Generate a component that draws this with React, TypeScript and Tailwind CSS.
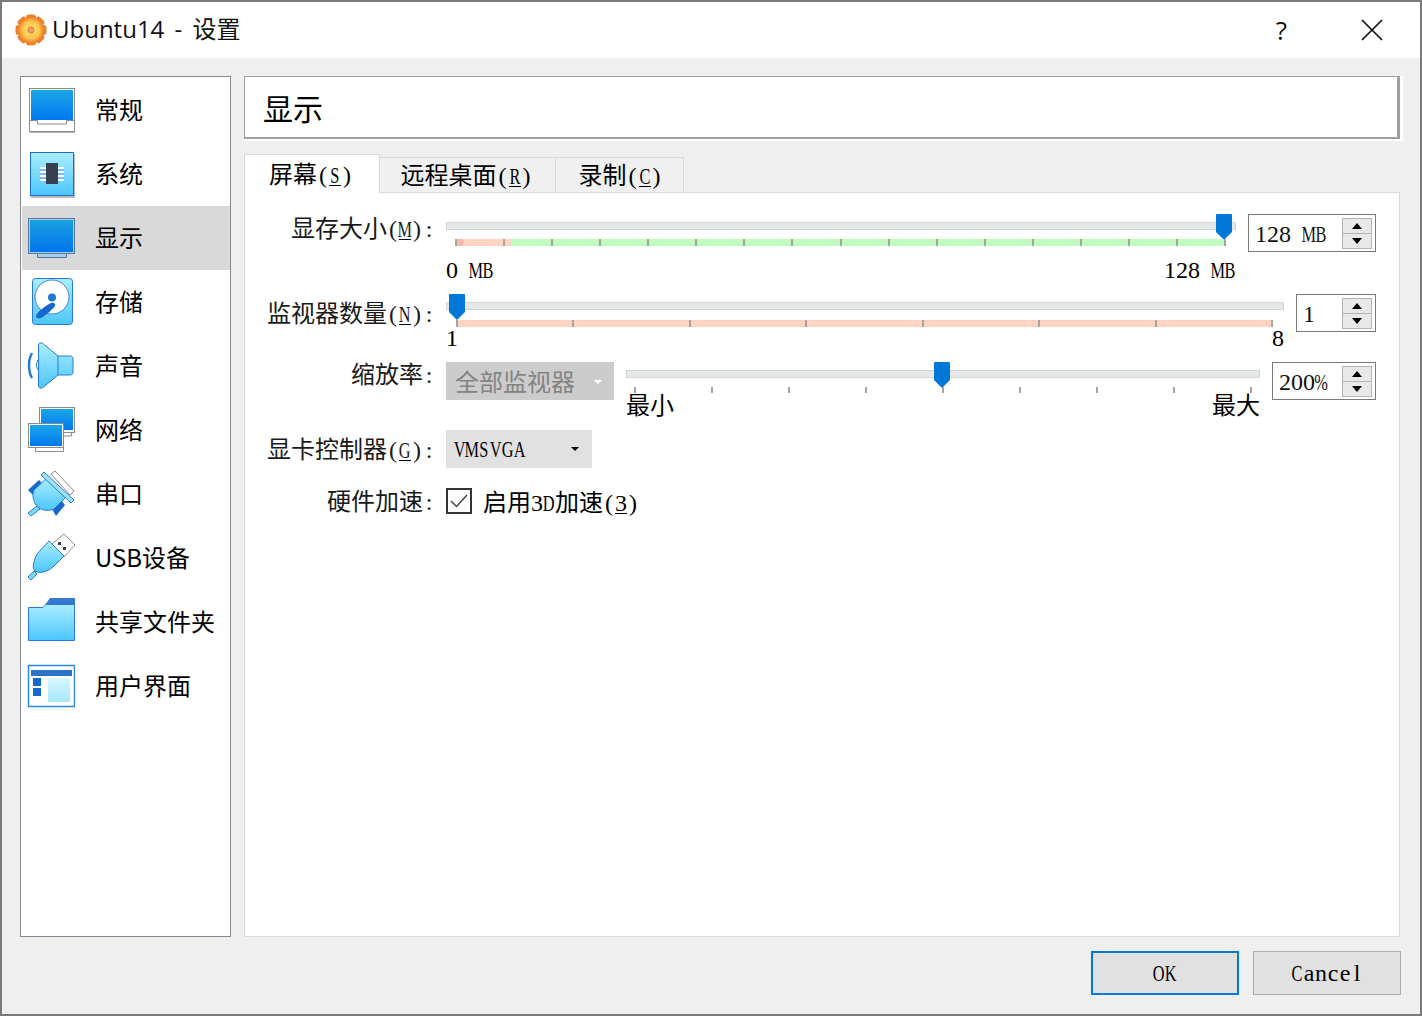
import type { ReactNode } from "react";

const cjk = "font-['Noto_Sans_CJK_SC','Liberation_Sans',sans-serif]";

// the reference is SimSun: latin letters sit in 12px cells, capitals squeezed to fit
function Cell({ c, under }: { c: string; under?: boolean }) {
  const squeeze = /[A-Z%]/.test(c);
  return (
    <span className={`inline-flex justify-center w-[12px] h-[22px] leading-[22px] align-baseline ${under ? "border-b border-black" : ""}`}>
      <span className={squeeze ? "inline-block scale-x-[0.68]" : "inline-block"}>{c === " " ? "\u00a0" : c}</span>
    </span>
  );
}

function L({ children }: { children: string }) {
  return (
    <span className="font-['Liberation_Serif',serif] text-[24px] whitespace-nowrap">
      {children.split("").map((c, i) => (
        <Cell key={i} c={c} />
      ))}
    </span>
  );
}

// "(S)" with the mnemonic underlined
function Key({ k, colon }: { k: string; colon?: boolean }) {
  return (
    <span className="font-['Liberation_Serif',serif] text-[24px] whitespace-nowrap">
      <Cell c="(" />
      <Cell c={k} under />
      <Cell c=")" />
      {colon && <Cell c=":" />}
    </span>
  );
}

function Grad({ id, from, to }: { id: string; from: string; to: string }) {
  return (
    <defs>
      <linearGradient id={id} x1="0" y1="0" x2="0" y2="1">
        <stop offset="0" stopColor={from} />
        <stop offset="1" stopColor={to} />
      </linearGradient>
    </defs>
  );
}

function GeneralIcon() {
  return (
    <svg width="48" height="48" viewBox="0 0 48 48">
      <Grad id="g1" from="#1ba6e6" to="#0078f2" />
      <rect x="3" y="3" width="46" height="44" fill="#b5b5b5" />
      <rect x="2.500" y="2.500" width="45" height="43" fill="#fff" stroke="#8b8b8b" />
      <rect x="4" y="4" width="42" height="30" fill="url(#g1)" />
      <path d="M3 34.500h7.500v3.500h29v-3.500H47" fill="none" stroke="#8b8b8b" />
    </svg>
  );
}

function SystemIcon() {
  return (
    <svg width="48" height="48" viewBox="0 0 48 48">
      <Grad id="g2" from="#aaeeff" to="#4cc6fd" />
      <rect x="4" y="4" width="44" height="44" fill="#b9b9b9" />
      <rect x="3.500" y="2.500" width="43" height="43" fill="url(#g2)" stroke="#1a6fd0" />
      <path d="M13 17h24v2H13zm0 4h24v2H13zm0 4h24v2H13zm0 4h24v2H13z" fill="#fff" />
      <path d="M13 19h24v2H13zm0 4h24v2H13zm0 4h24v2H13z" fill="#79bdf0" />
      <rect x="19" y="13" width="12" height="21" fill="#36404e" />
    </svg>
  );
}

function DisplayIcon() {
  return (
    <svg width="48" height="48" viewBox="0 0 48 48">
      <Grad id="g3" from="#1ba0e0" to="#0076ee" />
      <path d="M10.500 39.500h29v4h-29z" fill="#a9cdf0" stroke="#54779b" />
      <rect x="1.500" y="4.500" width="46" height="35" fill="#a9cdf0" stroke="#54779b" />
      <rect x="3" y="6" width="43" height="32" fill="url(#g3)" />
    </svg>
  );
}

function StorageIcon() {
  return (
    <svg width="48" height="48" viewBox="0 0 48 48">
      <Grad id="g4" from="#aaeeff" to="#4cc6fd" />
      <rect x="5.500" y="0.500" width="40" height="46" rx="3" fill="url(#g4)" stroke="#2a78d8" />
      <circle cx="25" cy="19" r="17" fill="#fff" stroke="#3f88dc" />
      <circle cx="25" cy="19.500" r="4" fill="#1e78d8" />
      <path d="M9 38c0-3 10-11 15-13 3-1 5 1 4 3-2 3-10 10-14 12-3 1-5 0-5-2z" fill="#1668cc" />
    </svg>
  );
}

function AudioIcon() {
  return (
    <svg width="48" height="48" viewBox="0 0 48 48">
      <Grad id="g5" from="#aaeeff" to="#4cc6fd" />
      <path d="M11.500 3c0-2 3-3 5-1l14.500 12h12c2 0 3 1 3 3v13c0 2-1 3-3 3H31L16.500 45c-2 2-5 1-5-1z" fill="url(#g5)" stroke="#2a78d8" />
      <path d="M31 14v19" stroke="#2a78d8" />
      <path d="M5 11c-4 7-4 18 0 25" fill="none" stroke="#2a78d8" strokeWidth="2.500" />
      <path d="M11 18c-2 3-2 7 0 10" fill="none" stroke="#2a78d8" />
    </svg>
  );
}

function NetworkIcon() {
  return (
    <svg width="48" height="48" viewBox="0 0 48 48">
      <Grad id="g6" from="#1ba6e6" to="#0078f2" />
      <rect x="12.500" y="1.500" width="35" height="25" fill="#fff" stroke="#8b8b8b" />
      <rect x="14" y="3" width="32" height="21" fill="url(#g6)" />
      <path d="M44.500 27v3h-8" fill="none" stroke="#8b8b8b" />
      <path d="M8.500 41v4.500h28V41" fill="#fff" stroke="#8b8b8b" />
      <rect x="1.500" y="17.500" width="35" height="24" fill="#fff" stroke="#8b8b8b" />
      <rect x="3" y="19" width="32" height="21" fill="url(#g6)" />
    </svg>
  );
}

function SerialIcon() {
  return (
    <svg width="48" height="48" viewBox="0 0 48 48">
      <Grad id="g7" from="#aaeeff" to="#4cc6fd" />
      <path d="M24 4l4-3 19 20-4 4z" fill="#fff" stroke="#8b8b8b" />
      <path d="M1 20l11-10 4 4L6 25z" fill="#1668cc" />
      <path d="M25 39l9-9 4 5-9 11z" fill="#1668cc" />
      <path d="M7 20L20 8l19 19-12 12c-7 3-14 1-18-4-3-5-4-10-2-15z" fill="url(#g7)" stroke="#2a78d8" />
      <path d="M14 5l3-3 30 28-3 3z" fill="#9fe4fd" stroke="#2a78d8" />
      <path d="M10 36l-9 7 3 3 9-7z" fill="#7fd8fd" stroke="#2a78d8" />
    </svg>
  );
}

function UsbIcon() {
  return (
    <svg width="48" height="48" viewBox="0 0 48 48">
      <Grad id="g8" from="#aaeeff" to="#4cc6fd" />
      <g transform="translate(0 -2)">
        <path d="M25 12L37 2l11 11-11 12z" fill="#fff" stroke="#8b8b8b" />
        <rect x="31" y="10" width="3" height="3" fill="#36404e" />
        <rect x="36" y="15" width="3" height="3" fill="#36404e" />
        <path d="M22 9l15 15-11 11c-6 5-13 7-18 4-3-3-2-9 2-17z" fill="url(#g8)" stroke="#2a78d8" />
        <path d="M7 39l-6 6 3 3 6-6z" fill="#7fd8fd" stroke="#2a78d8" />
      </g>
    </svg>
  );
}

function FolderIcon() {
  return (
    <svg width="48" height="48" viewBox="0 0 48 48">
      <Grad id="g9" from="#aaeeff" to="#4cc6fd" />
      <path d="M18 7l5-7h25v9H18z" fill="#3478d0" />
      <path d="M1.500 9.500H16l3-3h28.500v36H1.500z" fill="url(#g9)" stroke="#2a78d8" />
    </svg>
  );
}

function InterfaceIcon() {
  return (
    <svg width="48" height="48" viewBox="0 0 48 48">
      <Grad id="g10" from="#d8f7ff" to="#a6e8ff" />
      <rect x="1.500" y="3.500" width="46" height="41" fill="#fff" stroke="#2a88e0" strokeWidth="1.500" />
      <rect x="4" y="8" width="41" height="6" fill="#2e72c8" />
      <rect x="6" y="16" width="8" height="8" fill="#1668cc" />
      <rect x="6" y="26" width="8" height="8" fill="#1668cc" />
      <rect x="21" y="16" width="22" height="24" fill="url(#g10)" />
    </svg>
  );
}

function TitleIcon() {
  const teeth = [0, 45, 90, 135, 180, 225, 270, 315];
  return (
    <svg width="32" height="32" viewBox="0 0 32 32">
      <defs>
        <radialGradient id="gear" cx="0.5" cy="0.5" r="0.5">
          <stop offset="0" stopColor="#ffe07a" />
          <stop offset="0.65" stopColor="#fdc84e" />
          <stop offset="1" stopColor="#ee8a2c" />
        </radialGradient>
      </defs>
      {teeth.map((a) => (
        <rect key={a} x="11" y="0.500" width="10" height="9" rx="3" fill="#ee7f2e" transform={`rotate(${a} 16 16)`} />
      ))}
      <circle cx="16" cy="16" r="12.500" fill="url(#gear)" />
      <circle cx="16" cy="16" r="3" fill="#e8a060" stroke="#e07a30" />
    </svg>
  );
}

const pages = [
  { name: "常规", icon: <GeneralIcon /> },
  { name: "系统", icon: <SystemIcon /> },
  { name: "显示", icon: <DisplayIcon />, active: true },
  { name: "存储", icon: <StorageIcon /> },
  { name: "声音", icon: <AudioIcon /> },
  { name: "网络", icon: <NetworkIcon /> },
  { name: "串口", icon: <SerialIcon /> },
  { name: "USB设备", icon: <UsbIcon /> },
  { name: "共享文件夹", icon: <FolderIcon /> },
  { name: "用户界面", icon: <InterfaceIcon /> },
];

function Handle({ className }: { className: string }) {
  return (
    <svg width="16" height="26" viewBox="0 0 16 26" className={`absolute ${className}`}>
      <path d="M1 0h14a1 1 0 0 1 1 1v17l-8 8-8-8V1a1 1 0 0 1 1-1z" fill="#0078d7" />
    </svg>
  );
}

function Spin({ value, className }: { value: string; className: string }) {
  return (
    <div className={`flex justify-between items-center border border-[#7a7a7a] bg-white pl-[6px] pr-[2px] ${className}`}>
      <span className="text-[#111] mt-[2px]"><L>{value}</L></span>
      <div className="flex flex-col w-[30px] h-[31px] border border-[#b4b4b4] bg-[#e9e9e9] mr-[1px]">
        <div className="flex-1 flex items-center justify-center border-b border-[#b4b4b4]">
          <div className="w-0 h-0 border-x-[5px] border-x-transparent border-b-[6px] border-b-black" />
        </div>
        <div className="flex-1 flex items-center justify-center">
          <div className="w-0 h-0 border-x-[5px] border-x-transparent border-t-[6px] border-t-black" />
        </div>
      </div>
    </div>
  );
}

function Ticks({ count }: { count: number }) {
  return (
    <div className="absolute inset-0 flex justify-between">
      {Array.from({ length: count }, (_, i) => (
        <div key={i} className="w-[2px] h-full bg-[#a8a498]" />
      ))}
    </div>
  );
}

function Label({ children, className }: { children: ReactNode; className: string }) {
  return (
    <div className={`w-[190px] shrink-0 mr-[11px] flex items-center justify-end text-[24px] text-[#1a1a1a] ${className}`}>
      <div>{children}</div>
    </div>
  );
}

function Track() {
  return <div className="h-[8px] bg-[#e6e9e9] border border-[#d4d4d4]" />;
}

export default function App() {
  return (
    <div className={`${cjk} w-[1422px] h-[1016px] flex flex-col bg-[#efefef] border-x-2 border-y-2 border-[#7a7a7a] overflow-hidden text-black`}>
      <div className="h-[56px] shrink-0 bg-white flex items-center pl-[13px] pr-[37px]">
        <TitleIcon />
        <span className="ml-[5px] mt-[-2px] text-[24px] leading-none [word-spacing:4px] font-['Open_Sans','Noto_Sans_CJK_SC',sans-serif] text-[#111]">Ubuntu14 - 设置</span>
        <span className="ml-auto mr-[74px] text-[26px] leading-none font-['Open_Sans',sans-serif] text-[#111]">?</span>
        <svg width="22" height="22" viewBox="0 0 22 22">
          <path d="M1 1l20 20M21 1L1 21" stroke="#111" strokeWidth="1.700" />
        </svg>
      </div>

      <div className="flex flex-1 pt-[18px] pl-[18px] pr-[20px]">
        <div className="w-[211px] h-[861px] shrink-0 border border-[#838a94] bg-white pt-[1px] pl-[1px] mr-[13px]">
          {pages.map((p) => (
            <div key={p.name} className={`h-[64px] flex items-center pl-[5px] ${p.active ? "bg-[#d9d9d9]" : ""}`}>
              <div className="w-[48px] h-[48px] shrink-0">{p.icon}</div>
              <span className="ml-[20px] mt-[-2px] text-[24px] leading-none text-black">{p.name}</span>
            </div>
          ))}
        </div>

        <div className="flex-1 flex flex-col">
          <div className="h-[65px] shrink-0 bg-white mr-[-2px]">
            <div className="h-[63px] mr-[3px] bg-white border border-[#a0a0a0] border-r-[3px] border-b-2 flex items-center pl-[18px] text-[30px] leading-none">
              显示
            </div>
          </div>

          <div className="h-[40px] mt-[11px] shrink-0 flex items-end relative">
            <div className="h-[39px] w-[136px] bg-white border-x border-t border-[#d9d9d9] flex items-center justify-center text-[24px] mb-[-1px] relative z-10">
              <span className="mr-[2px]">屏幕<Key k="S" /></span>
            </div>
            <div className="h-[35px] w-[176px] bg-[#f0f0f0] border-r border-t border-[#d9d9d9] flex items-center justify-center text-[24px]">
              <span className="mr-[2px]">远程桌面<Key k="R" /></span>
            </div>
            <div className="h-[35px] w-[128px] bg-[#f0f0f0] border-r border-t border-[#d9d9d9] flex items-center justify-center text-[24px]">
              <span className="ml-[2px]">录制<Key k="C" /></span>
            </div>
          </div>

          <div className="h-[745px] shrink-0 bg-white border border-[#d9d9d9] mr-[1px] pt-[21px] pr-[23px]">
            <div className="flex h-[70px]">
              <Label className="h-[28px]">显存大小<Key k="M" colon /></Label>
              <div className="w-[790px] relative pt-[8px]">
                <Track />
                <Handle className="left-[770px] top-0" />
                <div className="ml-[9px] mr-[10px] mt-[9px] h-[7px] relative flex">
                  <div className="w-[8px] bg-[#ffb5ab]" />
                  <div className="w-[48px] bg-[#ffd5c2]" />
                  <div className="flex-1 bg-[#c0fbbf]" />
                  <Ticks count={17} />
                </div>
                <div className="flex justify-between mt-[6px]"><L>0 MB</L><L>128 MB</L></div>
              </div>
              <Spin value="128 MB" className="ml-[12px] w-[128px] h-[38px]" />
            </div>

            <div className="flex h-[58px] mt-[10px]">
              <Label className="h-[38px]">监视器数量<Key k="N" colon /></Label>
              <div className="w-[838px] relative pt-[8px]">
                <Track />
                <Handle className="left-[3px] top-0" />
                <div className="ml-[10px] mr-[11px] mt-[10px] h-[7px] relative bg-[#ffd5c2]">
                  <Ticks count={8} />
                </div>
                <div className="flex justify-between mt-[-7px]"><L>1</L><L>8</L></div>
              </div>
              <Spin value="1" className="ml-[12px] w-[80px] h-[38px]" />
            </div>

            <div className="flex h-[56px] mt-[10px]">
              <Label className="h-[24px]">缩放率<L>:</L></Label>
              <div className="w-[168px] h-[38px] shrink-0 bg-[#cccccc] flex items-center pl-[9px] text-[24px] leading-none text-[#838383]">
                全部监视器
                <div className="ml-[19px] mt-[1px] w-0 h-0 border-x-[4px] border-x-transparent border-t-[4px] border-t-white" />
              </div>
              <div className="w-[634px] ml-[12px] relative pt-[8px]">
                <Track />
                <Handle className="left-[308px] top-0" />
                <div className="mx-[8px] mt-[9px] h-[6px] relative">
                  <Ticks count={9} />
                </div>
                <div className="flex justify-between mt-[-1px] text-[24px] leading-none"><span>最小</span><span>最大</span></div>
              </div>
              <Spin value="200%" className="ml-[12px] w-[104px] h-[38px]" />
            </div>

            <div className="flex h-[38px] mt-[12px]">
              <Label className="h-[38px]">显卡控制器<Key k="G" colon /></Label>
              <div className="w-[146px] h-[38px] bg-[#e1e1e1] flex items-center pl-[8px]">
                <L>VMSVGA</L>
                <div className="ml-[45px] w-0 h-0 border-x-[4px] border-x-transparent border-t-[4px] border-t-black" />
              </div>
            </div>

            <div className="flex h-[26px] mt-[20px]">
              <Label className="h-[26px]">硬件加速<L>:</L></Label>
              <div className="w-[26px] h-[26px] border-2 border-[#333] flex items-center justify-center">
                <svg width="20" height="20" viewBox="0 0 20 20"><path d="M2 10l5.500 5.500L18 4" fill="none" stroke="#444" strokeWidth="1.500" /></svg>
              </div>
              <div className="ml-[11px] text-[24px] leading-[26px]">启用<L>3D</L>加速<Key k="3" /></div>
            </div>
          </div>
        </div>
      </div>

      <div className="h-[77px] shrink-0 flex justify-end gap-[14px] pt-[14px] pr-[19px]">
        <button className="w-[148px] h-[44px] bg-[#e1e1e1] border-2 border-[#0078d7]"><L>OK</L></button>
        <button className="w-[148px] h-[44px] bg-[#e1e1e1] border border-[#adadad]"><L>Cancel</L></button>
      </div>
    </div>
  );
}
